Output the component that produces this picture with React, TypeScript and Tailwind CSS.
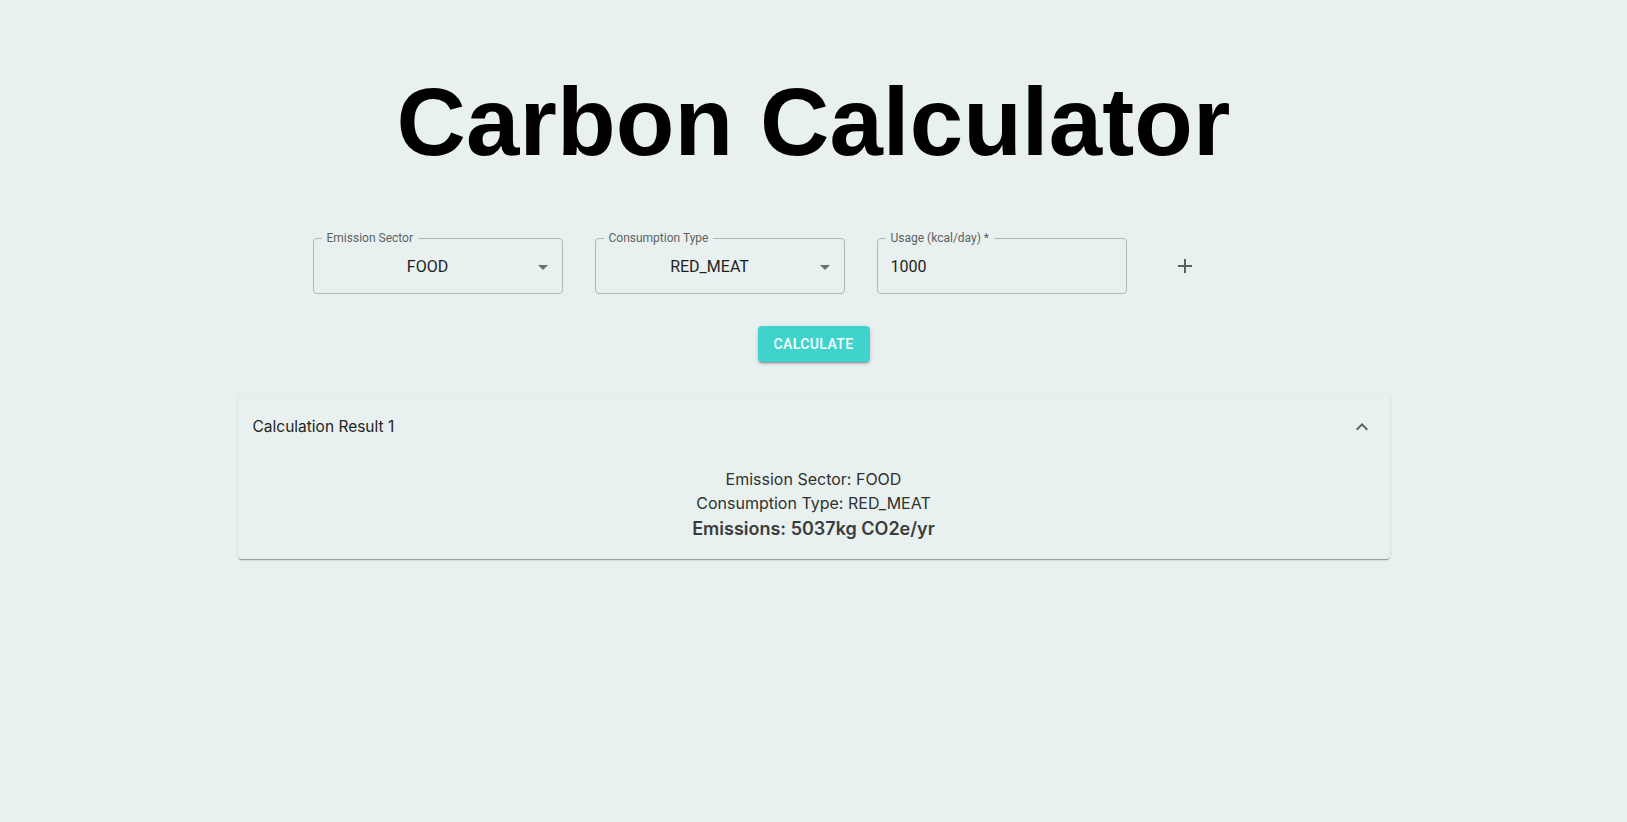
import React from "react";

const roboto = { fontFamily: "Roboto, 'Liberation Sans', sans-serif" };

function ArrowDrop() {
  return (
    <svg viewBox="0 0 24 24" className="w-6 h-6 fill-[#6b6f6e]">
      <path d="M7 10l5 5 5-5z" />
    </svg>
  );
}

function Field({
  label,
  value,
  select,
}: {
  label: string;
  value: string;
  select?: boolean;
}) {
  return (
    <div className="relative w-[250px] h-[56px] shrink-0">
      <div className="absolute inset-0 rounded-[4px] border border-[#b2b8b7]" />
      <span
        className="absolute left-[9px] -top-[9px] px-[5px] bg-[#e8f1ef] text-[12px] leading-[18px] text-[#5e6362]"
        style={roboto}
      >
        {label}
      </span>
      <div className="h-full flex items-center pl-[14px] pr-[8px] pt-[1px]" style={roboto}>
        {select ? (
          <>
            <div className="flex-1 text-center pr-[2px] text-[16px] text-[#1d1f1f]">
              {value}
            </div>
            <ArrowDrop />
          </>
        ) : (
          <div className="text-[16px] text-[#1d1f1f]">{value}</div>
        )}
      </div>
    </div>
  );
}

export default function App() {
  return (
    <div className="min-h-[822px] w-full bg-[#e8f1ef] pt-[74px] flex flex-col items-center">
      <h1
        className="text-[96px] leading-none font-bold text-black h-[96px] tracking-[0.1px]"
        style={{ fontFamily: "'Liberation Sans', Arial, sans-serif" }}
      >
        Carbon Calculator
      </h1>

      <div className="w-[1002px] mt-[68px] flex items-center gap-8">
        <Field label="Emission Sector" value="FOOD" select />
        <Field label="Consumption Type" value="RED_MEAT" select />
        <Field label="Usage (kcal/day) *" value="1000" />
        <button className="ml-[6px] w-10 h-10 flex items-center justify-center rounded-full">
          <svg viewBox="0 0 24 24" className="w-6 h-6 fill-[#5c605f]">
            <path d="M19 13h-6v6h-2v-6H5v-2h6V5h2v6h6v2z" />
          </svg>
        </button>
      </div>

      <button
        className="mt-8 w-[112px] h-[36px] rounded-[4px] bg-[#3fd4cb] text-white text-[14px] font-medium tracking-[0.4px] shadow-[0_3px_1px_-2px_rgba(0,0,0,0.2),0_2px_2px_0_rgba(0,0,0,0.14),0_1px_5px_0_rgba(0,0,0,0.12)]"
        style={roboto}
      >
        CALCULATE
      </button>

      <div
        className="mt-[33px] w-[1152px] rounded-[4px] bg-[#e8f1ef] shadow-[0_2px_1px_-1px_rgba(0,0,0,0.2),0_1px_1px_0_rgba(0,0,0,0.14),0_1px_3px_0_rgba(0,0,0,0.12)]"
        style={{ fontFamily: "Inter, 'Liberation Sans', sans-serif" }}
      >
        <div className="h-16 flex items-center justify-between pl-[15px] pr-4">
          <span className="text-[15.5px] text-[#222524]">Calculation Result 1</span>
          <svg viewBox="0 0 24 24" className="w-6 h-6 fill-[#5c605f]">
            <path d="M12 8l-6 6 1.41 1.41L12 10.83l4.59 4.58L18 14z" />
          </svg>
        </div>
        <div className="pt-2 pb-[17px] px-4 flex flex-col items-center text-[#2f3231]">
          <div className="text-[16px] leading-6">Emission Sector: FOOD</div>
          <div className="text-[16px] leading-6">Consumption Type: RED_MEAT</div>
          <div className="text-[18px] leading-[27px] font-semibold text-[#3a3d3c]">
            Emissions: 5037kg CO2e/yr
          </div>
        </div>
      </div>
    </div>
  );
}
